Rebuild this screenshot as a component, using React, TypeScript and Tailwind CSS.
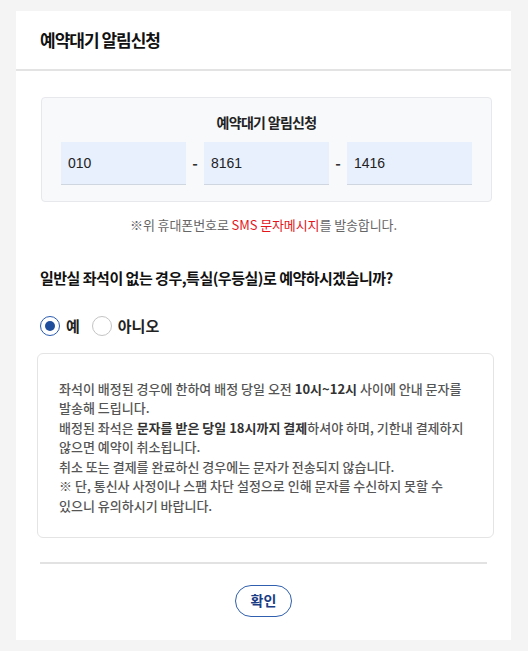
const Radio = ({ checked, label }: { checked?: boolean; label: string }) => (
  <label className="flex items-center gap-[6px]">
    <span
      className={
        checked
          ? "flex h-5 w-5 items-center justify-center rounded-full border border-[#2a5bb0] bg-white"
          : "flex h-5 w-5 items-center justify-center rounded-full border border-[#c4c4c4] bg-white"
      }
    >
      {checked && <span className="h-[10px] w-[10px] rounded-full bg-[#1f4e9c]" />}
    </span>
    <span className="text-[15px] font-bold text-[#222]">{label}</span>
  </label>
);

const PhoneInput = ({ value }: { value: string }) => (
  <div className="flex h-[43px] w-[125px] items-center border-b border-[#cfd6e0] bg-[#e8f0fe] pl-[7px] font-['Liberation_Sans',sans-serif] text-[14px] text-[#222]">
    {value}
  </div>
);

const App = () => {
  return (
    <div className="min-h-[651px] bg-[#f4f4f4] pt-[11px] font-['Noto_Sans_CJK_KR','Noto_Sans',sans-serif]">
      <div className="ml-4 w-[495px] bg-white pb-[23px]">
        {/* Header */}
        <div className="flex h-[60px] items-center border-b-2 border-[#e3e3e3] px-6">
          <h2 className="text-[17px] font-bold tracking-[-1px] text-[#111]">예약대기 알림신청</h2>
        </div>

        {/* Phone box */}
        <div className="ml-[25px] mt-[26px] w-[451px] rounded-[4px] border border-[#e6e8ec] bg-[#f8f9fb] px-[19px] pt-[14px] pb-4">
          <p className="text-center text-[14px] font-bold tracking-[-0.7px] text-[#222]">예약대기 알림신청</p>
          <div className="mt-[9px] flex items-center justify-between">
            <PhoneInput value="010" />
            <span className="text-[15px] font-bold text-[#333]">-</span>
            <PhoneInput value="8161" />
            <span className="text-[15px] font-bold text-[#333]">-</span>
            <PhoneInput value="1416" />
          </div>
        </div>

        <p className="mt-[13px] text-center text-[13px] tracking-[-0.1px] text-[#666]">
          ※위 휴대폰번호로 <span className="text-[#e5141b]">SMS 문자메시지</span>를 발송합니다.
        </p>

        {/* Question */}
        <p className="ml-6 mt-[32px] text-[15px] font-bold tracking-[-0.5px] text-[#111]">
          일반실 좌석이 없는 경우,특실(우등실)로 예약하시겠습니까?
        </p>
        <div className="ml-6 mt-[26px] flex items-center gap-[12px]">
          <Radio checked label="예" />
          <Radio label="아니오" />
        </div>

        {/* Notice */}
        <div className="ml-[21px] mt-[15px] h-[185px] w-[457px] rounded-[6px] border border-[#e4e4e4] bg-white pl-[21px] pt-[25px] text-[13px] font-medium leading-[19.5px] text-[#555]">
          <p className="whitespace-nowrap">
            좌석이 배정된 경우에 한하여 배정 당일 오전 <b className="text-[#333]">10시~12시</b> 사이에 안내 문자를
          </p>
          <p className="whitespace-nowrap">발송해 드립니다.</p>
          <p className="whitespace-nowrap">
            배정된 좌석은 <b className="text-[#333]">문자를 받은 당일 18시까지 결제</b>하셔야 하며, 기한내 결제하지
          </p>
          <p className="whitespace-nowrap">않으면 예약이 취소됩니다.</p>
          <p className="whitespace-nowrap">취소 또는 결제를 완료하신 경우에는 문자가 전송되지 않습니다.</p>
          <p className="whitespace-nowrap">※ 단, 통신사 사정이나 스팸 차단 설정으로 인해 문자를 수신하지 못할 수</p>
          <p className="whitespace-nowrap">있으니 유의하시기 바랍니다.</p>
        </div>

        {/* Divider */}
        <div className="ml-6 mt-[24px] h-[2px] w-[447px] bg-[#e2e2e2]" />

        {/* Button */}
        <div className="mt-[21px] flex justify-center">
          <button className="h-8 w-[57px] rounded-full border border-[#2f5fae] bg-white text-[14px] font-bold text-[#1a3d85]">
            확인
          </button>
        </div>
      </div>
    </div>
  );
};

export default App;
